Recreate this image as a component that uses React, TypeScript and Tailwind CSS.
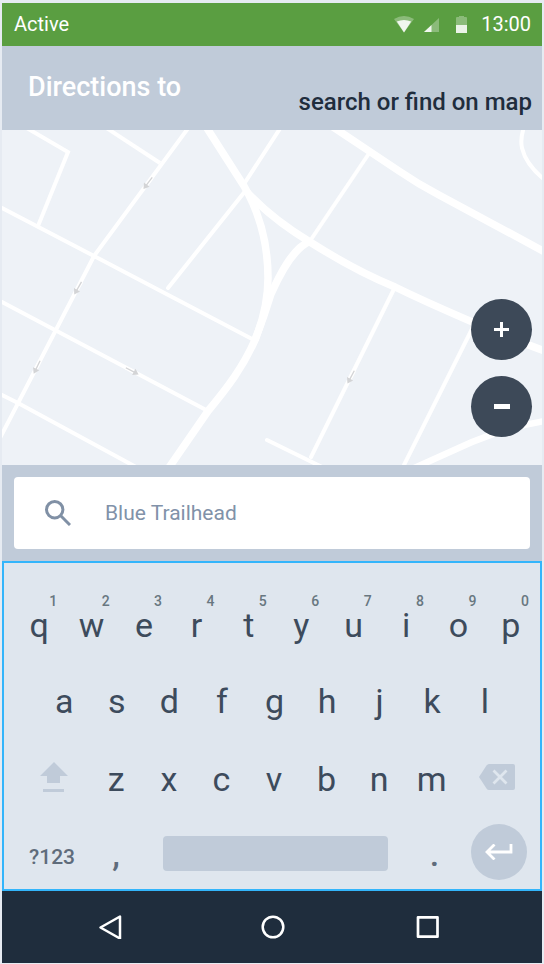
import React from "react";

const topRow: [string, string][] = [
  ["q", "1"], ["w", "2"], ["e", "3"], ["r", "4"], ["t", "5"],
  ["y", "6"], ["u", "7"], ["i", "8"], ["o", "9"], ["p", "0"],
];
const middleRow = ["a", "s", "d", "f", "g", "h", "j", "k", "l"];
const bottomRow = ["z", "x", "c", "v", "b", "n", "m"];

// One-way street markers: position and heading in degrees.
const arrows: [number, number, number][] = [
  [148, 183, 127],
  [78, 288, 120],
  [37, 367, 116],
  [132, 371, 28],
  [351, 377, 118],
];

function StatusBar() {
  return (
    <header className="flex h-[43px] shrink-0 items-center bg-[#5a9e41] pl-3 pr-[11px] text-xl leading-6 text-white">
      <span className="flex-1 pb-0.5">Active</span>
      <svg className="mr-2.5 h-[18px] w-5" viewBox="0 0 20 18" aria-hidden="true">
        <path d="M0 3Q10-3 20 3L10 16.500Z" fill="#fff" opacity=".3" />
        <path d="M2.800 5.500Q10 2.500 17.200 5.500L10 16.500Z" fill="#fff" opacity=".88" />
      </svg>
      <svg className="mr-[17px] h-[18px] w-[15px]" viewBox="0 0 15 18" aria-hidden="true">
        <path d="M0 16L15 2V16Z" fill="#fff" opacity=".3" />
        <path d="M0 16L7.500 9V16Z" fill="#fff" opacity=".88" />
      </svg>
      <svg className="mr-3.5 h-[18px] w-[11px]" viewBox="0 0 11 18" aria-hidden="true">
        <path d="M0 2Q0 1 1 1H3V0H8V1H10Q11 1 11 2V9H0Z" fill="#fff" opacity=".3" />
        <path d="M0 9H11V17H0Z" fill="#fff" opacity=".88" />
      </svg>
      <time className="pb-0.5">13:00</time>
    </header>
  );
}

function MapView() {
  return (
    <section aria-label="Map" className="relative min-h-[335px] flex-1 overflow-hidden bg-[#eef2f7]">
      <svg
        className="absolute inset-0 h-full w-full"
        viewBox="2 130 540 335"
        preserveAspectRatio="xMidYMid slice"
        fill="none"
        stroke="#fff"
        aria-hidden="true"
      >
        <g strokeWidth="4">
          <path d="M25 127L68 152L38 226" />
          <path d="M105 127L160 163" />
          <path d="M189 127L94 256L74 295L0 438" />
          <path d="M0 207L94 256L254 340" />
          <path d="M0 301L208 411" />
          <path d="M0 394L18 403L136 467" />
          <path d="M281 127L244 184L246 190L168 288" strokeLinecap="round" />
          <path d="M370 152L310 241" />
          <path d="M524 127Q520 139 522 148Q526 165 545 180" />
          <path d="M395 287L311 457" strokeLinecap="round" />
          <path d="M474 325L403 467" />
          <path d="M267 440L322 467" strokeLinecap="round" />
        </g>
        <g strokeWidth="7.500">
          <path d="M205 125L244 186C263 219 268 251 268 278C268 303 262 323 255 340C243 367 228 387 208 411L168 469" />
          <path d="M245 190C264 211 290 230 310 242C340 261 368 276 395 287C430 304 500 335 545 351" />
          <path d="M330 125L369 151L399 171Q418 184 439 195L545 252" />
          <path d="M310 241C292 249 279 276 271 294Q264 317 255 340" />
        </g>
        <path d="M412 469L472 442Q508 427 545 421" strokeWidth="6.500" />
        {arrows.map(([x, y, angle]) => (
          <g key={x} transform={`translate(${x} ${y}) rotate(${angle})`}>
            <path d="M-7 0H4" strokeWidth="3.500" />
            <path d="M-7 0H3" stroke="#d3d4d6" strokeWidth="1.300" />
            <path d="M2-3.500L7.500 0L2 3.500Z" fill="#d3d4d6" stroke="none" />
          </g>
        ))}
      </svg>
      <div className="absolute bottom-7 right-2.5 flex flex-col gap-4">
        <button aria-label="Zoom in" className="flex size-[61px] items-center justify-center rounded-full bg-[#3d4958]">
          <svg className="size-[15px]" viewBox="0 0 15 15" stroke="#fff" strokeWidth="3" aria-hidden="true">
            <path d="M0 7.500H15M7.500 0V15" />
          </svg>
        </button>
        <button aria-label="Zoom out" className="flex size-[61px] items-center justify-center rounded-full bg-[#3d4958]">
          <span className="h-[5px] w-4 bg-white" />
        </button>
      </div>
    </section>
  );
}

function LetterKey({ letter, digit }: { letter: string; digit?: string }) {
  return (
    <button className="flex min-w-0 flex-1 flex-col items-center text-[34px] leading-8 text-[#3d4b5c]">
      {digit && (
        <span className="pb-px pl-7 text-sm font-medium leading-[14px] text-[#687780]">{digit}</span>
      )}
      <span>{letter}</span>
    </button>
  );
}

function Keyboard() {
  return (
    <section aria-label="Keyboard" className="h-[330px] shrink-0 border-2 border-[#33b5fb] bg-[#dfe6ee] pt-[31px]">
      <div className="flex pl-[9px] pr-[3px]">
        {topRow.map(([letter, digit]) => (
          <LetterKey key={letter} letter={letter} digit={digit} />
        ))}
      </div>
      <div className="mt-11 flex pl-[34px] pr-[29px]">
        {middleRow.map((letter) => (
          <LetterKey key={letter} letter={letter} />
        ))}
      </div>
      <div className="mt-[45px] flex items-center pl-[13px] pr-1">
        <button aria-label="Shift" className="flex w-[73px] justify-center pb-1">
          <svg className="h-[30px] w-7" viewBox="0 0 28 30" fill="#c0cbd9" aria-hidden="true">
            <path d="M14 0L28 14H20V21H7V14H0ZM3 27H24V30H3Z" />
          </svg>
        </button>
        {bottomRow.map((letter) => (
          <LetterKey key={letter} letter={letter} />
        ))}
        <button aria-label="Backspace" className="flex w-[78px] justify-center pb-1">
          <svg className="h-[26px] w-9" viewBox="0 0 36 26" aria-hidden="true">
            <path d="M10 0H34Q36 0 36 2V24Q36 26 34 26H10Q8.500 26 7.500 24.500L0 13L7.500 1.500Q8.500 0 10 0Z" fill="#c0cbd9" />
            <path d="M14.500 6.500L27.500 19.500M27.500 6.500L14.500 19.500" stroke="#dfe6ee" strokeWidth="2.800" />
          </svg>
        </button>
      </div>
      <div className="mt-7 flex items-center pl-[25px] pr-[13px] font-medium text-[#5f6c7b]">
        <button className="pt-2.5 text-[21px] leading-6">?123</button>
        <button className="w-[88px] pr-1.5 pt-1 text-[34px] leading-8">,</button>
        <button aria-label="Space" className="mt-0.5 h-[35px] flex-1 rounded bg-[#c0cbd9]" />
        <button className="w-[83px] pl-2.5 pt-1 text-[34px] leading-8">.</button>
        <button aria-label="Enter" className="flex size-14 items-center justify-center rounded-full bg-[#c0cbd9]">
          <svg className="h-4 w-7" viewBox="0 0 28 16" fill="none" stroke="#fff" strokeWidth="2.800" aria-hidden="true">
            <path d="M26 0V8H2M9.500 .500L2 8L9.500 15.500" />
          </svg>
        </button>
      </div>
    </section>
  );
}

function NavigationBar() {
  return (
    <nav className="flex h-[72px] shrink-0 items-center justify-center gap-[131px] bg-[#1f2d3d] pr-1.5">
      <button aria-label="Back" className="mr-2">
        <svg className="size-6" viewBox="0 0 24 24" fill="none" stroke="#fff" strokeWidth="2.500" strokeLinejoin="round" aria-hidden="true">
          <path d="M2.500 12.500L22 1.500V23.500Z" />
        </svg>
      </button>
      <button aria-label="Home">
        <svg className="size-6" viewBox="0 0 24 24" fill="none" stroke="#fff" strokeWidth="2.500" aria-hidden="true">
          <circle cx="12" cy="12" r="10.300" />
        </svg>
      </button>
      <button aria-label="Recent apps">
        <svg className="size-6" viewBox="0 0 24 24" fill="none" stroke="#fff" strokeWidth="2.700" strokeLinejoin="round" aria-hidden="true">
          <path d="M2 2.300H21.500V21.700H2Z" />
        </svg>
      </button>
    </nav>
  );
}

export default function App() {
  return (
    <div className="flex min-h-screen flex-col bg-[#e6ebf2] px-0.5 pb-px pt-[3px] font-[Roboto,sans-serif]">
      <StatusBar />
      <div className="flex h-[84px] shrink-0 justify-between bg-[#c0cbd9] pl-[26px] pr-2.5">
        <h1 className="pt-[25px] text-[27px] font-medium leading-8 text-white">Directions to</h1>
        <p className="self-end pb-3 text-2xl font-medium leading-8 text-[#1f2d3d]">search or find on map</p>
      </div>
      <MapView />
      <div className="shrink-0 bg-[#c0cbd9] p-3">
        <label className="flex h-[72px] items-center rounded bg-white pl-[31px]">
          <svg className="mr-[34px] size-[26px] shrink-0" viewBox="0 0 26 26" fill="none" stroke="#8090a5" strokeWidth="3" aria-label="Search">
            <circle cx="9.700" cy="9.700" r="8.200" />
            <path d="M16 16L25 25" />
          </svg>
          <input
            type="text"
            aria-label="Destination"
            defaultValue="Blue Trailhead"
            className="min-w-0 flex-1 bg-transparent text-[21px] leading-6 text-[#8192a9] outline-none"
          />
        </label>
      </div>
      <Keyboard />
      <NavigationBar />
    </div>
  );
}
